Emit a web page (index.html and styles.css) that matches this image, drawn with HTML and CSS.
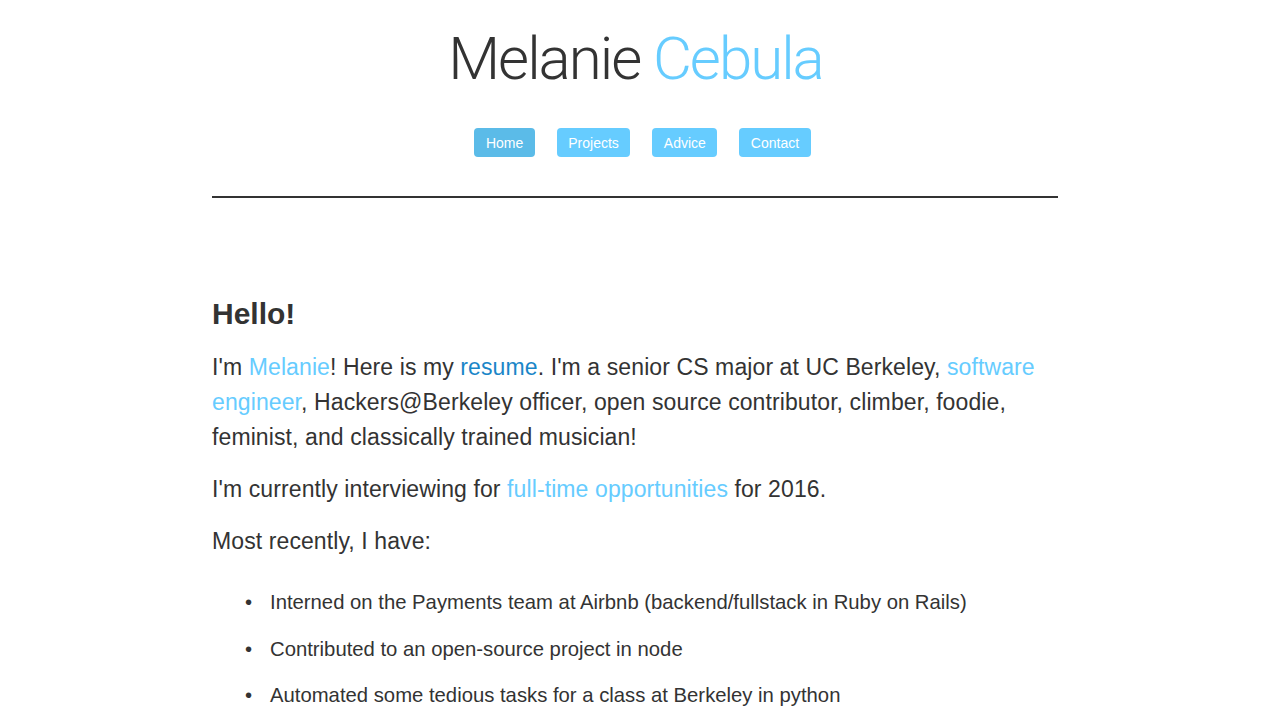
FILE: index.html
```html
<!DOCTYPE html>
<html>
<head>
<meta charset="utf-8">
<title>Melanie Cebula</title>
<link rel="stylesheet" href="styles.css">
</head>
<body>
<div class="page">
  <header class="header">
    <h1 class="title">Melanie <span class="accent">Cebula</span></h1>
    <nav class="nav">
      <a class="nav-btn active" href="#">Home</a>
      <a class="nav-btn" href="#">Projects</a>
      <a class="nav-btn" href="#">Advice</a>
      <a class="nav-btn" href="#">Contact</a>
    </nav>
    <hr class="rule">
  </header>
  <main class="content">
    <h2 class="heading">Hello!</h2>
    <p class="para">I'm <a class="link" href="#">Melanie</a>! Here is my <a class="link visited" href="#">resume</a>. I'm a senior CS major at UC Berkeley, <a class="link" href="#">software engineer</a>, Hackers@Berkeley officer, open source contributor, climber, foodie, feminist, and classically trained musician!</p>
    <p class="para">I'm currently interviewing for <a class="link" href="#">full-time opportunities</a> for 2016.</p>
    <p class="para">Most recently, I have:</p>
    <ul class="list">
      <li class="item">Interned on the Payments team at Airbnb (backend/fullstack in Ruby on Rails)</li>
      <li class="item">Contributed to an open-source project in node</li>
      <li class="item">Automated some tedious tasks for a class at Berkeley in python</li>
    </ul>
  </main>
</div>
</body>
</html>
```
FILE: styles.css
```css
html, body {
  margin: 0;
  padding: 0;
  background: #fff;
}
body {
  font-family: "Liberation Sans", Arial, Helvetica, sans-serif;
  color: #333;
}
.page {
  width: 847px;
  margin: 0 auto;
}
.header {
  text-align: center;
  padding-top: 23px;
}
.title {
  margin: 0;
  font-family: Roboto, "Liberation Sans", sans-serif;
  font-size: 60px;
  font-weight: 300;
  line-height: 72px;
  color: #333;
  letter-spacing: -2px;
}
.accent {
  color: #66ccff;
}
.nav {
  display: flex;
  justify-content: center;
  gap: 22px;
  margin-top: 33px;
  padding-left: 14px;
}
.nav-btn {
  display: inline-block;
  height: 29px;
  line-height: 30px;
  padding: 0 11.5px;
  font-size: 14px;
  color: #fff;
  text-decoration: none;
  background: #66ccff;
  border-radius: 4px;
}
.nav-btn.active {
  background: #5bbbe8;
}
.rule {
  margin: 39px 1px 0 0;
  border: 0;
  height: 2px;
  background: #333;
}
.content {
  padding-top: 98px;
}
.heading {
  margin: 0 0 18px 0;
  font-size: 30px;
  font-weight: bold;
  line-height: 36px;
}
.para {
  margin: 0 0 17px 0;
  font-size: 23px;
  line-height: 35px;
  letter-spacing: 0.1px;
}
.link {
  color: #66ccff;
  text-decoration: none;
}
.link.visited {
  color: #1a86c8;
}
.list {
  list-style: none;
  margin: 0;
  padding: 13px 0 0 33px;
  font-size: 20.3px;
  line-height: 26px;
}
.item {
  display: flex;
  margin: 0 0 20.5px 0;
}
.item::before {
  content: "\2022";
  flex: none;
  width: 25px;
}
```
